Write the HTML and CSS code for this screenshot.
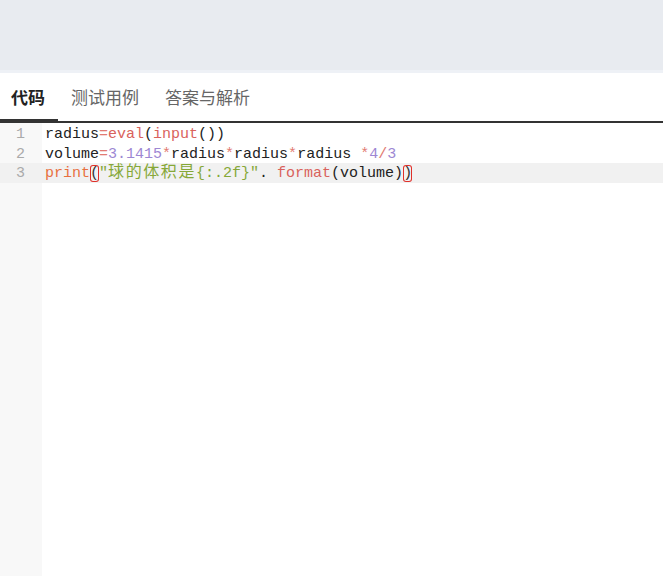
FILE: index.html
```html
<!DOCTYPE html>
<html lang="zh-CN">
<head>
    <meta charset="UTF-8">
    <meta name="viewport" content="width=device-width, initial-scale=1.0">
    <title>代码</title>
    <link rel="stylesheet" href="styles.css">
</head>
<body>
    <div class="topbar"></div>

    <div class="tabs">
        <div class="tab active">代码</div>
        <div class="tab">测试用例</div>
        <div class="tab">答案与解析</div>
    </div>

    <!-- code editor -->
    <div class="editor">
        <div class="row">
            <div class="ln">1</div>
            <div class="txt">radius<span class="op">=</span><span class="fn">eval</span>(<span class="fn">input</span>())</div>
        </div>
        <div class="row">
            <div class="ln">2</div>
            <div class="txt">volume<span class="op">=</span><span class="num">3.1415</span><span class="op">*</span>radius<span class="op">*</span>radius<span class="op">*</span>radius <span class="op">*</span><span class="num">4</span><span class="op">/</span><span class="num">3</span></div>
        </div>
        <div class="row current">
            <div class="ln">3</div>
            <div class="txt"><span class="kw">print</span><span class="match">(</span><span class="str">"<span class="cjk">球的体积是</span>{:.2f}"</span>. <span class="fn">format</span>(volume)<span class="match">)</span></div>
        </div>
    </div>
</body>
</html>
```

FILE: styles.css
```css
html, body {
    height: 100%;
}

body {
    margin: 0;
    display: flex;
    flex-direction: column;
    background-color: #fff;
    font-family: "Noto Sans CJK SC", "Liberation Sans", sans-serif;
}

.topbar {
    height: 70px;
    flex-shrink: 0;
    background-color: #e8ebf0;
    border-bottom: 3px solid #eef1f6;
}

.tabs {
    display: flex;
    height: 48px;
    border-bottom: 2px solid #333;
    flex-shrink: 0;
}

.tab {
    padding: 0 13px;
    line-height: 48px;
    font-size: 17px;
    color: #666;
}

.tab.active {
    padding-left: 11px;
    color: #222;
    font-weight: bold;
    border-bottom: 2px solid #333;
    height: 46px;
}

.editor {
    flex: 1;
    padding-top: 1px;
    background: linear-gradient(to right, #f8f8f8 42px, #fff 42px);
    font-family: "Liberation Mono", "Noto Sans CJK SC", monospace;
    font-size: 15px;
    color: #222;
}

.row {
    display: flex;
    height: 19.5px;
    line-height: 21px;
}

.row.current {
    background-color: #f1f1f1;
}

.ln {
    width: 25px;
    padding-right: 20px;
    text-align: right;
    color: #aaa;
    flex-shrink: 0;
}

.txt {
    white-space: pre;
}

.op { color: #e27b72; }
.fn { color: #d9625c; }
.kw { color: #e8703f; }
.num { color: #9d87d3; }
.str { color: #86a838; }

.cjk {
    font-size: 16px;
    letter-spacing: 1.6px;
}

.match {
    display: inline-block;
    line-height: 17px;
    box-shadow: inset 0 0 0 1px #e0302a;
    border-radius: 3px;
    color: #333;
}
```
